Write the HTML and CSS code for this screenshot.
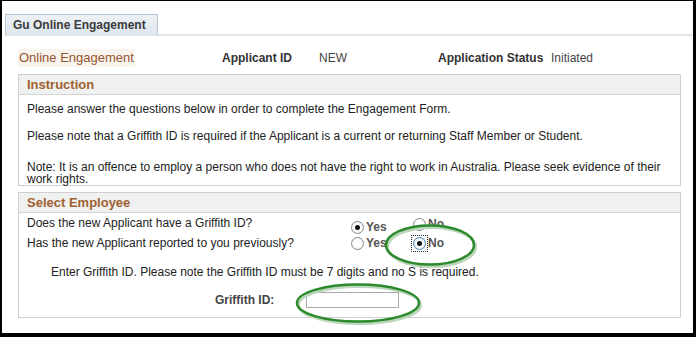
FILE: index.html
```html
<!DOCTYPE html>
<html lang="en">
<head>
    <meta charset="UTF-8">
    <title>Gu Online Engagement</title>
    <link rel="stylesheet" href="styles.css">
</head>
<body>
    <div class="frame">
        <div class="tab-bar">
            <div class="tab">Gu Online Engagement</div>
        </div>

        <div class="page-head">
            <div class="page-title">Online Engagement</div>
            <div class="field-label">Applicant ID</div>
            <div class="field-value">NEW</div>
            <div class="field-label">Application Status</div>
            <div class="field-value">Initiated</div>
        </div>

        <div class="group">
            <div class="group-title">Instruction</div>
            <div class="group-body info-body">
                <p>Please answer the questions below in order to complete the Engagement Form.</p>
                <p class="gap-wide">Please note that a Griffith ID is required if the Applicant is a current or returning Staff Member or Student.</p>
                <p class="tight">Note: It is an offence to employ a person who does not have the right to work in Australia. Please seek evidence of their work rights.</p>
            </div>
        </div>

        <div class="group">
            <div class="group-title">Select Employee</div>
            <div class="group-body select-body">
                <div class="question">
                    <span class="question-text">Does the new Applicant have a Griffith ID?</span>
                    <label class="choice choice-low"><input type="radio" name="q1" checked> Yes</label>
                    <label class="choice choice-high"><input type="radio" name="q1"> No</label>
                </div>
                <div class="question">
                    <span class="question-text">Has the new Applicant reported to you previously?</span>
                    <label class="choice"><input type="radio" name="q2"> Yes</label>
                    <label class="choice"><span class="focus-ring"><input type="radio" name="q2" class="focused" checked></span> No</label>
                </div>
                <div class="hint">Enter Griffith ID. Please note the Griffith ID must be 7 digits and no S is required.</div>
                <div class="id-row">
                    <span class="id-label">Griffith ID:</span>
                    <input type="text" class="id-input">
                </div>
            </div>
        </div>

        <!-- highlight marks drawn over the screenshot -->
        <svg class="mark mark-radio" width="96" height="48" viewBox="0 0 96 48">
            <ellipse cx="48" cy="22" rx="44" ry="19.5" fill="none" stroke="#bcd6bc" stroke-width="3" transform="translate(1.5 2)"/>
            <ellipse cx="48" cy="22" rx="44" ry="19.5" fill="none" stroke="#2b8a2b" stroke-width="2.5"/>
        </svg>
        <svg class="mark mark-input" width="130" height="46" viewBox="0 0 130 46">
            <ellipse cx="64" cy="21" rx="61" ry="18.5" fill="none" stroke="#bcd6bc" stroke-width="3" transform="translate(1.5 2)"/>
            <ellipse cx="64" cy="21" rx="61" ry="18.5" fill="none" stroke="#2b8a2b" stroke-width="2.5"/>
        </svg>
    </div>
</body>
</html>
```

FILE: styles.css
```css
* {
    margin: 0;
    padding: 0;
    box-sizing: border-box;
}

body {
    background: #000;
    font-family: "Liberation Sans", Arial, sans-serif;
    font-size: 12px;
    color: #333;
}

.frame {
    position: relative;
    width: 696px;
    height: 337px;
    background: #fff;
    border-style: solid;
    border-color: #000;
    border-width: 1px 3px 4px 2px;
    padding: 13px 0 0 3px;
}

.tab-bar {
    display: flex;
    border-bottom: 2px solid #e1e4e8;
    margin-right: 1px;
}

.tab {
    width: 153px;
    height: 21px;
    line-height: 20px;
    padding-left: 7px;
    font-weight: bold;
    color: #3a3a3a;
    background: linear-gradient(#edf1f6, #dfe6ee);
    border: 1px solid #b9c6d4;
    border-bottom: none;
    margin-bottom: -1px;
}

.page-head {
    display: grid;
    grid-template-columns: 204px 97px 119px 113px auto;
    align-items: center;
    margin: 13px 0 0 13px;
    height: 18px;
}

.page-title {
    justify-self: start;
    font-size: 13px;
    color: #95562d;
    background: #faf4ef;
    padding: 0 1px;
    line-height: 18px;
}

.field-label {
    font-weight: bold;
}

.field-value {
    color: #444;
}

.group {
    margin: 7px 13px 0 13px;
    width: 663px;
    border: 1px solid #cfcfcf;
}

.group + .group {
    margin-top: 6px;
}

.group-title {
    height: 20px;
    line-height: 19px;
    padding-left: 8px;
    font-size: 13px;
    font-weight: bold;
    color: #a0612f;
    background: #eff0f0;
    border-bottom: 1px solid #d4d4d4;
}

.group-body {
    padding: 0 8px;
    color: #222;
}

.info-body {
    padding-top: 8px;
}

.info-body p {
    line-height: 13px;
    margin-bottom: 14px;
}

.info-body p.gap-wide {
    margin-bottom: 18px;
}

.info-body p.tight {
    line-height: 12px;
    margin-bottom: 0;
}

.select-body {
    padding-bottom: 9px;
}

.question {
    display: flex;
    align-items: center;
    height: 20px;
}

.question-text {
    width: 324px;
}

.choice {
    display: flex;
    align-items: center;
    width: 62px;
    font-weight: bold;
    font-size: 12px;
    color: #555;
    gap: 2px;
}

.choice-low {
    margin-top: 8px;
}

.choice-high {
    margin-top: 2px;
}

.choice input {
    appearance: none;
    width: 13px;
    height: 13px;
    border: 1px solid #8a8a8a;
    border-radius: 50%;
    background: radial-gradient(#fff 40%, #ececec);
    display: grid;
    place-items: center;
}

.choice input:checked::after {
    content: "";
    width: 5px;
    height: 5px;
    border-radius: 50%;
    background: #111;
}

.focus-ring {
    display: flex;
    border: 1px dotted #222;
    padding: 1px;
    margin: -2px;
}

.choice input.focused {
    background: radial-gradient(#fff 35%, #cfe4f5);
    border-color: #4b87b8;
}

.hint {
    margin: 12px 0 0 24px;
    height: 14px;
}

.id-row {
    display: flex;
    align-items: center;
    margin: 13px 0 0 188px;
}

.id-label {
    font-weight: bold;
    color: #444;
    width: 91px;
}

.id-input {
    width: 93px;
    height: 16px;
    border: 1px solid #a9a9a9;
    background: #fff;
}

.mark {
    position: absolute;
    pointer-events: none;
}

.mark-radio {
    left: 380px;
    top: 222px;
}

.mark-input {
    left: 292px;
    top: 281px;
}
```
